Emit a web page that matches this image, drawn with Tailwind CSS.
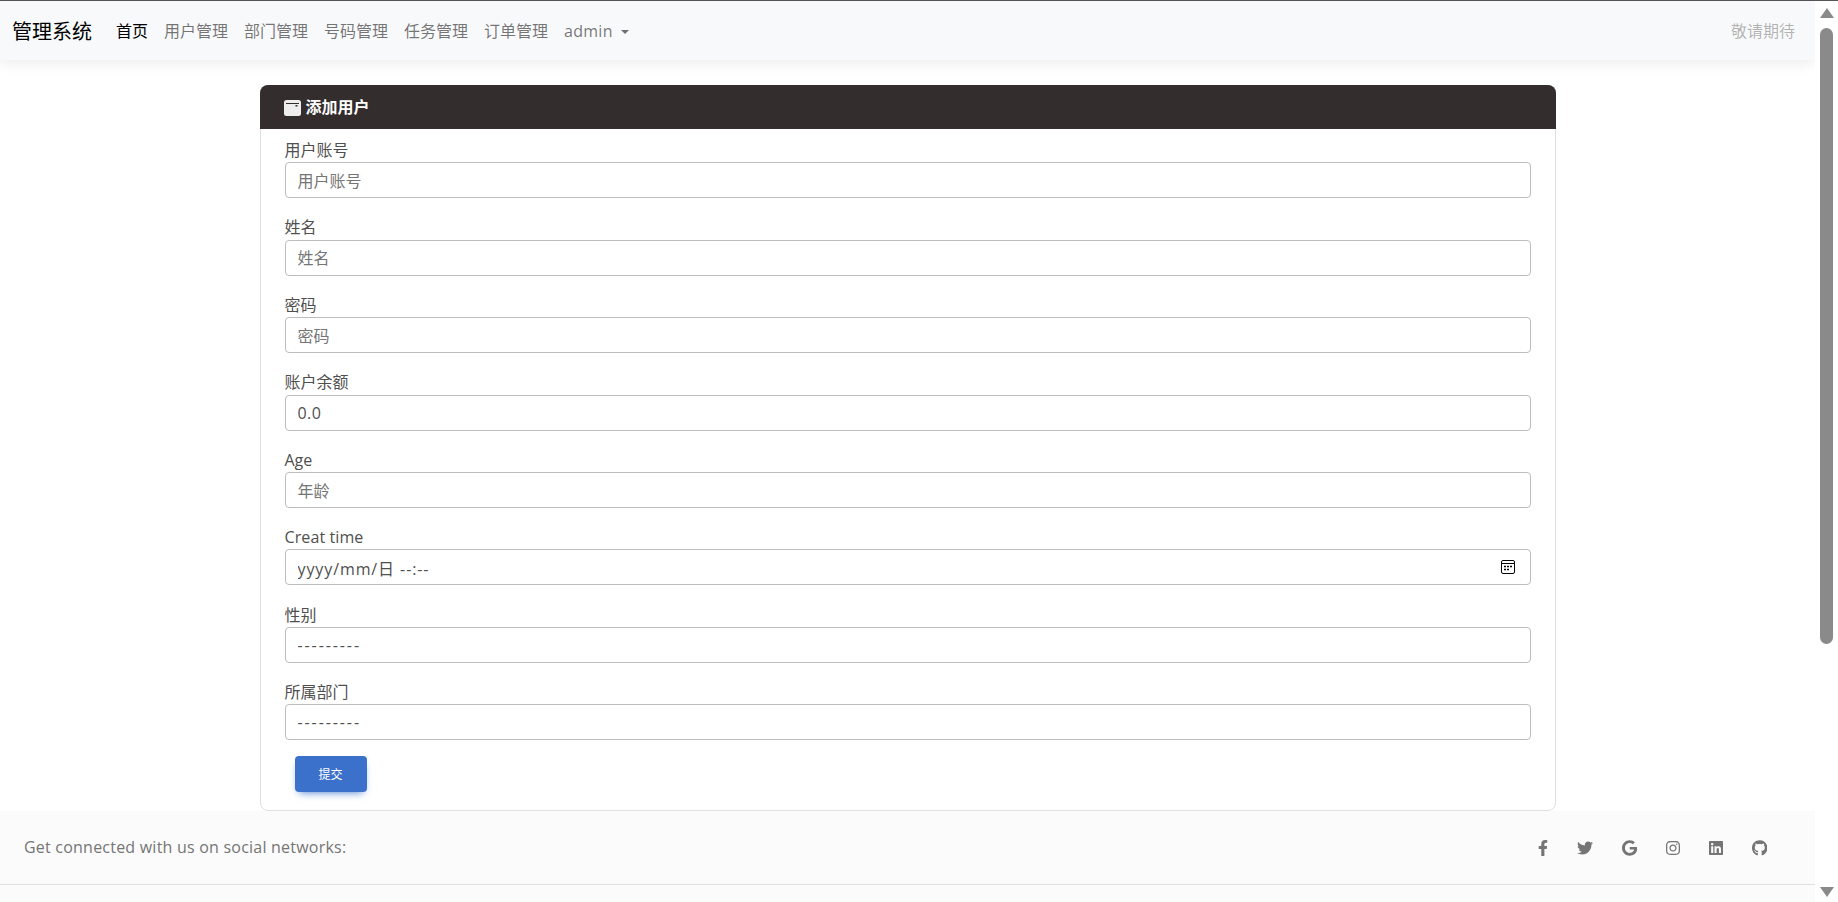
<!DOCTYPE html>
<html lang="zh">

<head>
    <meta charset="UTF-8">
    <meta name="viewport" content="width=device-width, initial-scale=1.0">
    <title>添加用户</title>
    <script src="https://cdn.jsdelivr.net/npm/@tailwindcss/browser@4"></script>
</head>

<body class="h-screen overflow-hidden flex bg-white text-[#4f4f4f] text-base leading-[1.6] font-['Open_Sans','Noto_Sans_CJK_SC',sans-serif]">

    <div class="w-[1815px] h-full flex flex-col overflow-hidden">
        <!-- navbar -->
        <nav class="relative z-10 h-[60px] shrink-0 border-t border-[#555] bg-[#f8f9fa] shadow-[0_4px_12px_rgba(0,0,0,0.07)] flex items-center justify-between px-3 pt-[2px]">
            <div class="flex items-center">
                <a href="#" class="text-xl text-black mr-6">管理系统</a>
                <a href="#" class="text-black mr-4">首页</a>
                <a href="#" class="text-black/55 mr-4">用户管理</a>
                <a href="#" class="text-black/55 mr-4">部门管理</a>
                <a href="#" class="text-black/55 mr-4">号码管理</a>
                <a href="#" class="text-black/55 mr-4">任务管理</a>
                <a href="#" class="text-black/55 mr-4">订单管理</a>
                <a href="#" class="text-black/55 flex items-center tracking-[0.25px]">admin
                    <span class="ml-2 w-0 h-0 border-x-[4px] border-x-transparent border-t-[4px] border-t-black/55"></span>
                </a>
            </div>
            <a href="#" class="text-black/30 mr-2">敬请期待</a>
        </nav>

        <!-- form card -->
        <div class="w-full max-w-[1320px] mx-auto px-3 mt-[25px] shrink-0">
            <div class="border border-[#e0e0e0] rounded-lg">
                <div class="h-11 -mx-px -mt-px pt-px bg-[#332d2d] rounded-t-lg flex items-center px-6 text-white font-semibold">
                    <svg class="w-[17px] h-4 mr-[5px]" viewBox="0 0 17 16">
                        <rect x="0" y="0" width="17" height="16" rx="2.5" fill="#eeeeee"/>
                        <path d="M2 3.5h13" stroke="#332d2d" stroke-width="1"/>
                        <path d="M11.5 5h2v1.5h-2z" fill="#332d2d"/>
                    </svg>
                    添加用户
                </div>
                <form class="px-6 pt-[9px] pb-[18px]">
                    <div class="mb-[17.15px]">
                        <label class="block h-[24.3px]">用户账号</label>
                        <input type="text" placeholder="用户账号" class="block w-full h-9 px-3 pt-px border border-[#bdbdbd] rounded placeholder:text-[#757575] outline-none">
                    </div>
                    <div class="mb-[17.15px]">
                        <label class="block h-[24.3px]">姓名</label>
                        <input type="text" placeholder="姓名" class="block w-full h-9 px-3 pt-px border border-[#bdbdbd] rounded placeholder:text-[#757575] outline-none">
                    </div>
                    <div class="mb-[17.15px]">
                        <label class="block h-[24.3px]">密码</label>
                        <input type="text" placeholder="密码" class="block w-full h-9 px-3 pt-px border border-[#bdbdbd] rounded placeholder:text-[#757575] outline-none">
                    </div>
                    <div class="mb-[17.15px]">
                        <label class="block h-[24.3px]">账户余额</label>
                        <input type="text" value="0.0" class="block w-full h-9 px-3 pt-px border border-[#bdbdbd] rounded outline-none tracking-[0.4px]">
                    </div>
                    <div class="mb-[17.15px]">
                        <label class="block h-[24.3px]">Age</label>
                        <input type="text" placeholder="年龄" class="block w-full h-9 px-3 pt-px border border-[#bdbdbd] rounded placeholder:text-[#757575] outline-none">
                    </div>
                    <div class="mb-[17.15px]">
                        <label class="block h-[24.3px] tracking-[0.1px]">Creat time</label>
                        <div class="relative">
                            <input type="text" value="yyyy/mm/日 --:--" class="block w-full h-9 px-3 pt-px border border-[#bdbdbd] rounded outline-none tracking-[0.9px]">
                            <svg class="absolute right-4 top-[11px] w-3.5 h-3.5 text-black" viewBox="0 0 14 14" fill="none" stroke="currentColor"><rect x="0.5" y="0.5" width="13" height="13" rx="1.5"/><path d="M1 3.5h12"/><path d="M3 6.5h2M6 6.5h2M9 6.5h2M3 9.5h2M6 9.5h2" stroke-width="1.4"/></svg>
                        </div>
                    </div>
                    <div class="mb-[17.15px]">
                        <label class="block h-[24.3px]">性别</label>
                        <select class="block w-full h-9 px-3 pt-px border border-[#bdbdbd] rounded outline-none appearance-none bg-white tracking-[1.9px]">
                            <option>---------</option>
                        </select>
                    </div>
                    <div class="mb-[17.15px]">
                        <label class="block h-[24.3px]">所属部门</label>
                        <select class="block w-full h-9 px-3 pt-px border border-[#bdbdbd] rounded outline-none appearance-none bg-white tracking-[1.9px]">
                            <option>---------</option>
                        </select>
                    </div>
                    <button type="button" class="block -mt-[2px] ml-[10px] w-[72px] h-9 pt-[2px] rounded bg-[#3b71ca] text-white text-xs shadow-[0_4px_9px_-4px_#3b71ca]">提交</button>
                </form>
            </div>
        </div>

        <!-- footer -->
        <footer class="flex-1 bg-[#fbfbfb] text-[#757575]">
            <div class="h-[74px] pt-[2px] border-b border-[#e0e0e0] flex items-center justify-between pl-6 pr-12">
                <span class="tracking-[0.22px]">Get connected with us on social networks:</span>
                <div class="flex items-center gap-[28.8px] fill-[#757575]">
                    <a href="#"><svg class="h-4 w-[10px]" viewBox="0 0 320 512"><path d="M279.14 288l14.22-92.66h-88.91v-60.13c0-25.35 12.42-50.06 52.24-50.06h40.42V6.26S260.43 0 225.36 0c-73.22 0-121.08 44.38-121.08 124.72v70.62H22.89V288h81.39v224h100.17V288z"/></svg></a>
                    <a href="#"><svg class="h-4 w-4" viewBox="0 0 512 512"><path d="M459.37 151.716c.325 4.548.325 9.097.325 13.645 0 138.72-105.583 298.558-298.558 298.558-59.452 0-114.68-17.219-161.137-47.106 8.447.974 16.568 1.299 25.34 1.299 49.055 0 94.213-16.568 130.274-44.832-46.132-.975-84.792-31.188-98.112-72.772 6.498.974 12.995 1.624 19.818 1.624 9.421 0 18.843-1.3 27.614-3.573-48.081-9.747-84.143-51.98-84.143-102.985v-1.299c13.969 7.797 30.214 12.67 47.431 13.319-28.264-18.843-46.781-51.005-46.781-87.391 0-19.492 5.197-37.36 14.294-52.954 51.655 63.675 129.3 105.258 216.365 109.807-1.624-7.797-2.599-15.918-2.599-24.04 0-57.828 46.782-104.934 104.934-104.934 30.213 0 57.502 12.67 76.67 33.137 23.715-4.548 46.456-13.32 66.599-25.34-7.798 24.366-24.366 44.833-46.132 57.827 21.117-2.273 41.584-8.122 60.426-16.243-14.292 20.791-32.161 39.308-52.628 54.253z"/></svg></a>
                    <a href="#"><svg class="h-4 w-[15.25px]" viewBox="0 0 488 512"><path d="M488 261.8C488 403.3 391.1 504 248 504 110.8 504 0 393.2 0 256S110.8 8 248 8c66.8 0 123 24.5 166.3 64.9l-67.5 64.9C258.5 52.6 94.3 116.6 94.3 256c0 86.5 69.1 156.6 153.7 156.6 98.2 0 135-70.4 140.8-106.9H248v-85.3h236.1c2.3 12.7 3.9 24.9 3.9 41.4z"/></svg></a>
                    <a href="#"><svg class="h-4 w-[14px]" viewBox="0 0 448 512"><path d="M224.1 141c-63.6 0-114.9 51.3-114.9 114.9s51.3 114.9 114.9 114.9S339 319.5 339 255.9 287.7 141 224.1 141zm0 189.6c-41.1 0-74.7-33.5-74.7-74.7s33.5-74.7 74.7-74.7 74.7 33.5 74.7 74.7-33.6 74.7-74.7 74.7zm146.4-194.3c0 14.9-12 26.8-26.8 26.8-14.9 0-26.8-12-26.8-26.8s12-26.8 26.8-26.8 26.8 12 26.8 26.8zm76.1 27.2c-1.7-35.9-9.9-67.7-36.2-93.9-26.2-26.2-58-34.4-93.9-36.2-37-2.1-147.9-2.1-184.9 0-35.8 1.7-67.6 9.9-93.9 36.1s-34.4 58-36.2 93.9c-2.1 37-2.1 147.9 0 184.9 1.7 35.9 9.9 67.7 36.2 93.9s58 34.4 93.9 36.2c37 2.1 147.9 2.1 184.9 0 35.9-1.7 67.7-9.9 93.9-36.2 26.2-26.2 34.4-58 36.2-93.9 2.1-37 2.1-147.8 0-184.8zM398.8 388c-7.8 19.6-22.9 34.7-42.6 42.6-29.5 11.7-99.5 9-132.1 9s-102.7 2.6-132.1-9c-19.6-7.8-34.7-22.9-42.6-42.6-11.7-29.5-9-99.5-9-132.1s-2.6-102.7 9-132.1c7.8-19.6 22.9-34.7 42.6-42.6 29.5-11.7 99.5-9 132.1-9s102.7-2.6 132.1 9c19.6 7.8 34.7 22.9 42.6 42.6 11.7 29.5 9 99.5 9 132.1s2.7 102.7-9 132.1z"/></svg></a>
                    <a href="#"><svg class="h-4 w-[14px]" viewBox="0 0 448 512"><path d="M416 32H31.9C14.3 32 0 46.5 0 64.3v383.4C0 465.5 14.3 480 31.9 480H416c17.6 0 32-14.5 32-32.3V64.3c0-17.8-14.4-32.3-32-32.3zM135.4 416H69V202.2h66.5V416zm-33.2-243c-21.3 0-38.5-17.3-38.5-38.5S80.9 96 102.2 96c21.2 0 38.5 17.3 38.5 38.5 0 21.3-17.2 38.5-38.5 38.5zm282.1 243h-66.4V312c0-24.8-.5-56.7-34.5-56.7-34.6 0-39.9 27-39.9 54.9V416h-66.4V202.2h63.7v29.2h.9c8.9-16.8 30.6-34.5 62.9-34.5 67.2 0 79.7 44.3 79.7 101.9V416z"/></svg></a>
                    <a href="#"><svg class="h-4 w-[15.5px]" viewBox="0 0 496 512"><path d="M165.9 397.4c0 2-2.3 3.6-5.2 3.6-3.3 0-5.6-1.6-5.6-3.6 0-2 2.3-3.6 5.2-3.6 3-.3 5.6 1.3 5.6 3.6zm-31.1-4.5c-.7 2 1.3 4.3 4.3 4.9 2.6 1 5.6 0 6.2-2s-1.3-4.3-4.3-5.2c-2.6-.7-5.5.3-6.2 2.3zm44.2-1.7c-2.9.7-4.9 2.6-4.6 4.9.3 2 2.9 3.3 5.9 2.6 2.9-.7 4.9-2.6 4.6-4.6-.3-1.9-3-3.2-5.9-2.9zM244.8 8C106.1 8 0 113.3 0 252c0 110.9 69.8 205.8 169.5 239.2 12.8 2.3 17.3-5.6 17.3-12.1 0-6.2-.3-40.4-.3-61.4 0 0-70 15-84.7-29.8 0 0-11.4-29.1-27.8-36.6 0 0-22.9-15.7 1.6-15.4 0 0 24.9 2 38.6 25.8 21.9 38.6 58.6 27.5 72.9 20.9 2.3-16 8.8-27.1 16-33.7-55.9-6.2-112.3-14.3-112.3-110.5 0-27.5 7.6-41.3 23.6-58.9-2.6-6.5-11.1-33.3 2.6-67.9 20.9-6.5 69 27 69 27 20-5.6 41.5-8.5 62.8-8.5s42.8 2.9 62.8 8.5c0 0 48.1-33.6 69-27 13.7 34.7 5.2 61.4 2.6 67.9 16 17.7 25.8 31.5 25.8 58.9 0 96.5-58.9 104.2-114.8 110.5 9.2 7.9 17 22.9 17 46.4 0 33.7-.3 75.4-.3 83.6 0 6.5 4.6 14.4 17.3 12.1C428.2 457.8 496 362.9 496 252 496 113.3 383.5 8 244.8 8z"/></svg></a>
                </div>
            </div>
        </footer>
    </div>

    <!-- scrollbar -->
    <div class="w-[23px] h-full shrink-0 bg-white border-t border-[#555] flex flex-col items-center justify-between pt-[7px] pb-[5px]">
        <span class="w-0 h-0 border-x-[7px] border-x-transparent border-b-[10px] border-b-[#8a8a8a]"></span>
        <span class="w-[13px] h-[616px] rounded-full bg-[#8a8a8a] mb-auto mt-[10px]"></span>
        <span class="w-0 h-0 border-x-[7px] border-x-transparent border-t-[10px] border-t-[#8a8a8a]"></span>
    </div>

</body>

</html>
